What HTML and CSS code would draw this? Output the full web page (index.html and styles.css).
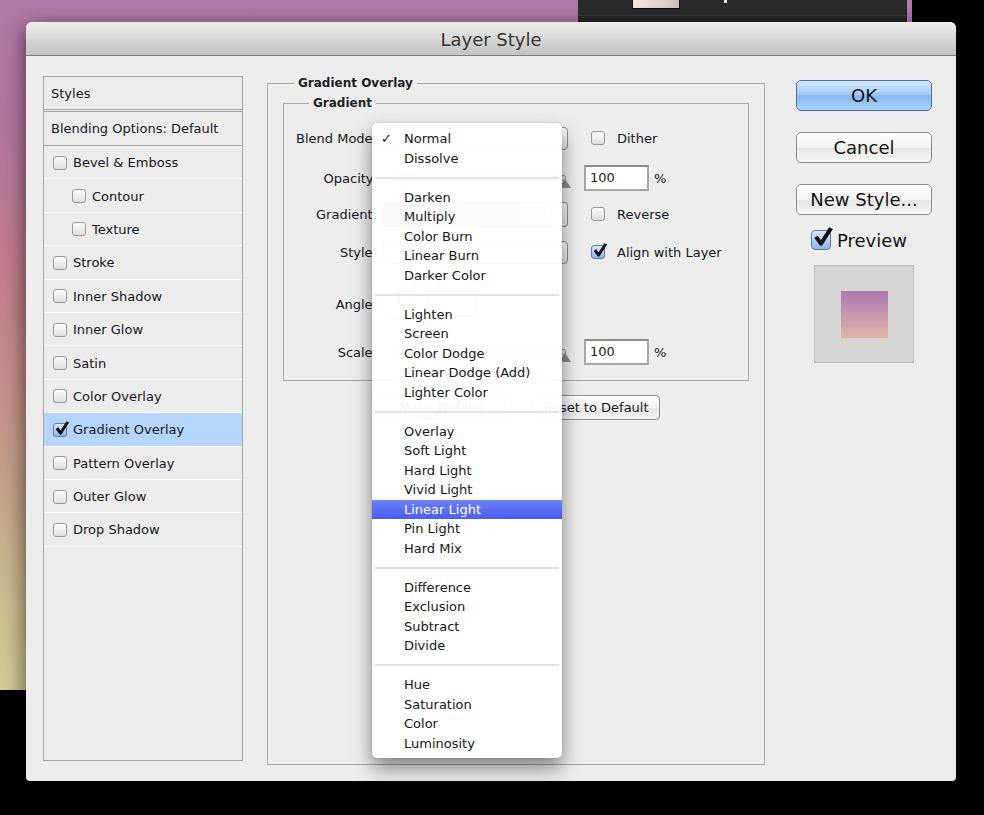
FILE: index.html
```html
<!DOCTYPE html>
<html>
<head>
<meta charset="utf-8">
<title>Layer Style</title>
<link rel="stylesheet" href="styles.css">
</head>
<body>
<div class="desktop">
  <div class="doc">
    <div class="panel">
      <div class="thumb"></div>
      <div class="mark"></div>
    </div>
  </div>

  <div class="dialog">
    <div class="titlebar">Layer Style</div>
    <div class="dlg-body">
      <div class="style-list">
        <div class="sl-head">Styles</div>
        <div class="sl-blend">Blending Options: Default</div>
        <div class="sl-item"><span class="cb"></span>Bevel &amp; Emboss</div>
        <div class="sl-item sub"><span class="cb"></span>Contour</div>
        <div class="sl-item sub"><span class="cb"></span>Texture</div>
        <div class="sl-item"><span class="cb"></span>Stroke</div>
        <div class="sl-item"><span class="cb"></span>Inner Shadow</div>
        <div class="sl-item"><span class="cb"></span>Inner Glow</div>
        <div class="sl-item"><span class="cb"></span>Satin</div>
        <div class="sl-item"><span class="cb"></span>Color Overlay</div>
        <div class="sl-item sel"><span class="cb on"><svg class="tick" viewBox="0 0 16 16"><path d="M1.6 7.9 L4.2 6.3 L6.5 9.6 L12.4 0.2 L15.2 1.4 L7.4 13.4 L5.7 13.4 Z"/></svg></span>Gradient Overlay</div>
        <div class="sl-item"><span class="cb"></span>Pattern Overlay</div>
        <div class="sl-item"><span class="cb"></span>Outer Glow</div>
        <div class="sl-item"><span class="cb"></span>Drop Shadow</div>
      </div>

      <fieldset class="group outer">
        <legend>Gradient Overlay</legend>
        <fieldset class="group inner">
          <legend>Gradient</legend>

          <div class="frow r1">
            <span class="lbl">Blend Mode:</span>
            <div class="ctl"><div class="select"><span class="arr"></span></div></div>
            <div class="x xc"><span class="cb"></span>Dither</div>
          </div>

          <div class="frow r2">
            <span class="lbl">Opacity:</span>
            <div class="ctl"><div class="slider"><span class="knob"></span></div></div>
            <div class="x xi"><span class="num">100</span><span class="pct">%</span></div>
          </div>

          <div class="frow r3">
            <span class="lbl">Gradient:</span>
            <div class="ctl"><div class="gsel"><span class="gsw"></span><span class="garrow"></span></div></div>
            <div class="x xc"><span class="cb"></span>Reverse</div>
          </div>

          <div class="frow r4">
            <span class="lbl">Style:</span>
            <div class="ctl"><div class="select"><span class="arr"></span></div></div>
            <div class="x xc"><span class="cb on"><svg class="tick" viewBox="0 0 16 16"><path d="M1.6 7.9 L4.2 6.3 L6.5 9.6 L12.4 0.2 L15.2 1.4 L7.4 13.4 L5.7 13.4 Z"/></svg></span>Align with Layer</div>
          </div>

          <div class="frow r5">
            <span class="lbl">Angle:</span>
            <div class="ctl angle"><span class="dial"><span class="hand"></span></span><span class="num small"></span></div>
            <div class="x"></div>
          </div>

          <div class="frow r6">
            <span class="lbl">Scale:</span>
            <div class="ctl"><div class="slider"><span class="knob"></span></div></div>
            <div class="x xi"><span class="num">100</span><span class="pct">%</span></div>
          </div>
        </fieldset>

        <div class="btnrow">
          <button class="pbtn make">Make Default</button>
          <button class="pbtn reset">Reset to Default</button>
        </div>
      </fieldset>

      <div class="actions">
        <button class="btn ok">OK</button>
        <button class="btn">Cancel</button>
        <button class="btn">New Style...</button>
        <div class="prev-row"><span class="cb big on"><svg class="tick" viewBox="0 0 16 16"><path d="M1.6 7.9 L4.2 6.3 L6.5 9.6 L12.4 0.2 L15.2 1.4 L7.4 13.4 L5.7 13.4 Z"/></svg></span>Preview</div>
        <div class="prev-box"><span class="prev-sw"></span></div>
      </div>
    </div>

    <div class="menu">
      <div class="mi checked">Normal</div>
      <div class="mi">Dissolve</div>
      <div class="msep"></div>
      <div class="mi">Darken</div>
      <div class="mi">Multiply</div>
      <div class="mi">Color Burn</div>
      <div class="mi">Linear Burn</div>
      <div class="mi">Darker Color</div>
      <div class="msep"></div>
      <div class="mi">Lighten</div>
      <div class="mi">Screen</div>
      <div class="mi">Color Dodge</div>
      <div class="mi">Linear Dodge (Add)</div>
      <div class="mi">Lighter Color</div>
      <div class="msep"></div>
      <div class="mi">Overlay</div>
      <div class="mi">Soft Light</div>
      <div class="mi">Hard Light</div>
      <div class="mi">Vivid Light</div>
      <div class="mi hl">Linear Light</div>
      <div class="mi">Pin Light</div>
      <div class="mi">Hard Mix</div>
      <div class="msep"></div>
      <div class="mi">Difference</div>
      <div class="mi">Exclusion</div>
      <div class="mi">Subtract</div>
      <div class="mi">Divide</div>
      <div class="msep"></div>
      <div class="mi">Hue</div>
      <div class="mi">Saturation</div>
      <div class="mi">Color</div>
      <div class="mi">Luminosity</div>
    </div>
  </div>
</div>
</body>
</html>
```

FILE: styles.css
```css
html, body {
  margin: 0;
  background: #000;
  font-family: "DejaVu Sans", sans-serif;
}

.desktop {
  position: relative;
  width: 984px;
  height: 815px;
  overflow: hidden;
  background: #000;
}

/* document canvas behind the dialog */
.doc {
  width: 912px;
  height: 690px;
  box-sizing: border-box;
  padding-left: 578px;
  display: flex;
  align-items: flex-start;
  background: linear-gradient(180deg, #b07aa8 0%, #b3779f 18%, #c27b8f 36%, #c68a8a 52%, #c3a28b 70%, #cbba91 85%, #d4cb98 100%);
}

.panel {
  width: 329px;
  height: 22px;
  display: flex;
  align-items: flex-start;
  background: linear-gradient(#2b2b2b 0 15px, #3a3a3a 15px 16px, #262626 16px);
}

.thumb {
  margin-left: 54px;
  width: 46px;
  height: 8px;
  border: 1px solid #111;
  border-top: none;
  background: linear-gradient(90deg, #efe6e4, #e0d4d0 60%, #c9bcb8);
}

.mark {
  margin-left: 44px;
  width: 3px;
  height: 3px;
  background: #e8e8e8;
}

/* dialog window */
.dialog {
  position: absolute;
  left: 26px;
  top: 22px;
  width: 930px;
  height: 759px;
  background: #ededed;
  border-radius: 6px 6px 4px 4px;
  box-shadow: 0 6px 22px rgba(0, 0, 0, 0.65);
}

.titlebar {
  height: 33px;
  line-height: 35px;
  border-bottom: 1px solid #7d7d7d;
  border-radius: 6px 6px 0 0;
  background: linear-gradient(#eeeeee, #c3c3c3);
  text-align: center;
  font-size: 18px;
  color: #343434;
}

.dlg-body {
  display: flex;
  align-items: flex-start;
  padding: 20px 24px 0 17px;
}

/* styles list */
.style-list {
  width: 200px;
  height: 685px;
  box-sizing: border-box;
  border: 1px solid #a6a6a6;
  background: #ececec;
  font-size: 13px;
  color: #16161e;
}

.sl-head {
  height: 32px;
  line-height: 33px;
  padding-left: 7px;
  border-bottom: 3px double #a6a6a6;
}

.sl-blend {
  height: 33px;
  line-height: 33px;
  padding-left: 7px;
  border-bottom: 1px solid #a6a6a6;
}

.sl-item {
  height: 31.4px;
  padding-top: 1px;
  border-bottom: 1px solid #fff;
  display: flex;
  align-items: center;
  gap: 6px;
  padding-left: 9px;
}

.sl-item.sub {
  padding-left: 28px;
}

.sl-item.sel {
  background: #b5d5fc;
}

/* checkbox */
.cb {
  position: relative;
  flex: none;
  width: 14px;
  height: 14px;
  box-sizing: border-box;
  border: 1px solid #999;
  border-radius: 3px;
  background: linear-gradient(#fdfdfd, #dedede);
}

.cb.on {
  border-color: #5f7aa3;
  background: linear-gradient(#dbe8fb, #8ab6ec);
}

.cb .tick {
  position: absolute;
  left: 0;
  top: -3px;
  width: 16px;
  height: 16px;
  fill: #111;
}

.cb.big {
  width: 20px;
  height: 20px;
  border-radius: 4px;
}

.cb.big .tick {
  width: 22px;
  height: 22px;
  top: -4px;
  left: 0;
}

/* group boxes */
.group {
  margin: 0;
  min-width: 0;
  box-sizing: border-box;
  border: 1px solid #a9a9a9;
}

.group > legend {
  font-weight: bold;
  font-size: 12px;
  line-height: 16px;
  padding: 0 4px;
  color: #1f1f1f;
}

.outer {
  flex: none;
  width: 498px;
  height: 690px;
  margin: -1px 0 0 24px;
  padding: 0 15px;
}

.outer > legend {
  margin-left: 11px;
}

.inner {
  height: 286px;
  margin-top: 4px;
  padding: 7px 0 0 0;
}

.inner > legend {
  margin-left: 25px;
}

.frow {
  display: grid;
  grid-template-columns: 96px 188px 1fr;
  align-items: center;
  font-size: 13px;
  color: #16161e;
}

.r1 { height: 40px; }
.r2 { height: 40px; }
.r3 { height: 32px; }
.r4 { height: 44px; }
.r5 { height: 60px; }
.r6 { height: 36px; }

.lbl {
  text-align: right;
  padding-right: 3px;
  white-space: nowrap;
}

.ctl {
  padding-left: 3px;
}

.select {
  position: relative;
  height: 23px;
  box-sizing: border-box;
  border: 1px solid #8e8e8e;
  border-radius: 4px;
  background: linear-gradient(#ffffff, #e4e4e4);
}

.arr {
  position: absolute;
  right: 0;
  top: 0;
  bottom: 0;
  width: 20px;
  border-left: 1px solid #b5b5b5;
}

.gsel {
  display: flex;
  height: 25px;
}

.gsw {
  width: 162px;
  box-sizing: border-box;
  border: 1px solid #8a8a8a;
  background: linear-gradient(90deg, #ae78aa, #e6b4ae);
}

.garrow {
  flex: 1;
  border: 1px solid #8e8e8e;
  border-left: none;
  border-radius: 0 4px 4px 0;
  background: linear-gradient(#fff, #e4e4e4);
}

.slider {
  position: relative;
  height: 4px;
  margin: 0 2px 0 4px;
  border: 1px solid #9a9a9a;
  border-radius: 2px;
  background: #dcdcdc;
}

.knob {
  position: absolute;
  right: -6px;
  top: 3px;
  width: 0;
  height: 0;
  border-left: 6px solid transparent;
  border-right: 6px solid transparent;
  border-bottom: 9px solid #8a8a8a;
}

.angle {
  display: flex;
  align-items: center;
  gap: 12px;
}

.dial {
  position: relative;
  width: 32px;
  height: 32px;
  box-sizing: border-box;
  border: 1px solid #8a8a8a;
  border-radius: 50%;
  background: radial-gradient(circle at 40% 35%, #ffffff, #d8d8d8);
}

.hand {
  position: absolute;
  left: 14px;
  top: 2px;
  width: 2px;
  height: 13px;
  background: #333;
}

.x {
  display: flex;
  align-items: center;
}

.xc {
  padding-left: 23px;
  gap: 12px;
}

.xi {
  padding-left: 16px;
}

.num {
  display: inline-block;
  width: 65px;
  height: 26px;
  box-sizing: border-box;
  border: 2px solid #a6a6a6;
  border-top-color: #8c8c8c;
  background: #fff;
  padding-left: 4px;
  line-height: 22px;
  color: #222;
}

.num.small {
  width: 50px;
}

.pct {
  margin-left: 5px;
}

.btnrow {
  display: flex;
  justify-content: center;
  gap: 20px;
  margin-top: 14px;
}

.pbtn {
  height: 25px;
  padding: 0;
  border: 1px solid #8f8f8f;
  border-radius: 4px;
  background: linear-gradient(#ffffff, #f0f0f0 50%, #e3e3e3 51%, #f5f5f5);
  font-family: "DejaVu Sans", sans-serif;
  font-size: 13px;
  color: #1b1b1b;
}

.pbtn.make { width: 140px; }
.pbtn.reset { width: 128px; }

/* right column */
.actions {
  flex: none;
  width: 136px;
  margin-left: 31px;
  padding-top: 4px;
  display: flex;
  flex-direction: column;
}

.btn {
  height: 31px;
  padding: 0;
  box-sizing: border-box;
  border: 1px solid #8b8b8b;
  border-radius: 5px;
  background: linear-gradient(#ffffff, #f3f3f3 50%, #e6e6e6 51%, #f7f7f7);
  font-family: "DejaVu Sans", sans-serif;
  font-size: 18px;
  color: #141414;
}

.btn + .btn {
  margin-top: 21px;
}

.btn.ok {
  border-color: #4c6ea5;
  background: linear-gradient(#d5e7fc 0%, #a8ccf6 45%, #88b8f2 52%, #abd1fb 100%);
}

.prev-row {
  display: flex;
  align-items: center;
  gap: 6px;
  height: 24px;
  margin-top: 13px;
  padding-left: 15px;
  font-size: 18px;
  color: #141414;
}

.prev-box {
  width: 100px;
  height: 98px;
  box-sizing: border-box;
  margin: 13px 0 0 18px;
  border: 1px solid #bcbcbc;
  background: #d6d6d6;
  display: flex;
  align-items: center;
  justify-content: center;
}

.prev-sw {
  width: 47px;
  height: 47px;
  background: linear-gradient(#ad78aa, #e5b3ae);
}

/* popup menu */
.menu {
  position: absolute;
  left: 346px;
  top: 101px;
  width: 190px;
  height: 635px;
  box-sizing: border-box;
  padding: 6px 0 5px;
  background: rgba(255, 255, 255, 0.955);
  border-radius: 5px;
  box-shadow: 0 10px 20px rgba(0, 0, 0, 0.45), 0 0 1px rgba(0, 0, 0, 0.45);
  font-size: 13px;
  color: #15151c;
}

.mi {
  position: relative;
  height: 19.5px;
  line-height: 19.5px;
  padding-left: 32px;
  white-space: nowrap;
}

.mi.checked::before {
  content: "✓";
  position: absolute;
  left: 9px;
  top: 0;
}

.mi.hl {
  background: linear-gradient(#6e81f8, #4a5cf0);
  color: #fff;
}

.msep {
  height: 19.5px;
  display: flex;
  align-items: center;
  padding: 0 3px;
}

.msep::after {
  content: "";
  flex: 1;
  height: 2px;
  background: #e3e3e3;
}
```
